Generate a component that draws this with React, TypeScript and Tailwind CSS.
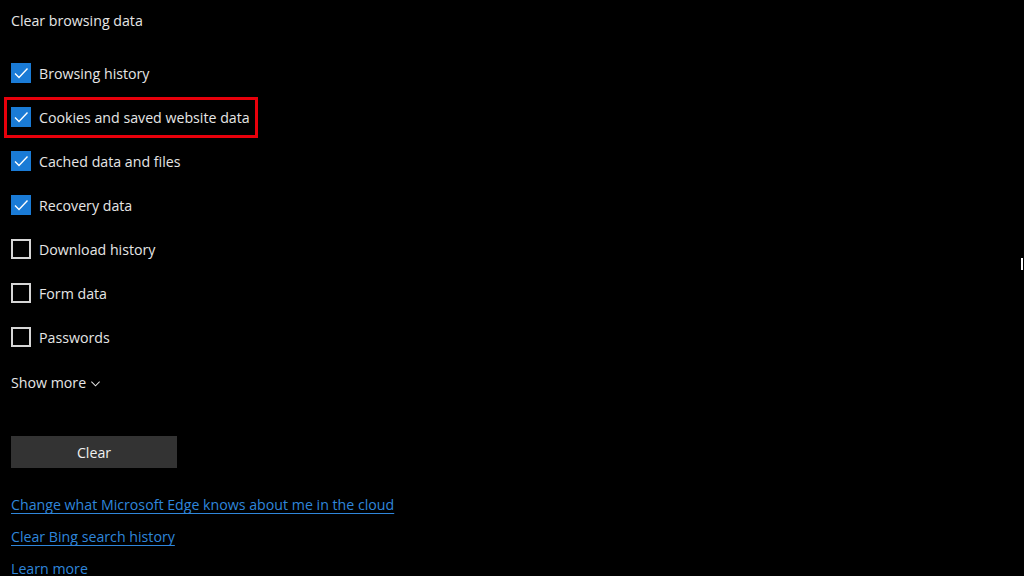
import React from "react";

const ITEMS: { label: string; checked: boolean }[] = [
  { label: "Browsing history", checked: true },
  { label: "Cookies and saved website data", checked: true },
  { label: "Cached data and files", checked: true },
  { label: "Recovery data", checked: true },
  { label: "Download history", checked: false },
  { label: "Form data", checked: false },
  { label: "Passwords", checked: false },
];

const LINKS = [
  "Change what Microsoft Edge knows about me in the cloud",
  "Clear Bing search history",
  "Learn more",
];

function Box({ checked }: { checked: boolean }) {
  if (!checked) {
    return <div className="h-5 w-5 shrink-0 border-2 border-[#d6d6d6]" />;
  }
  return (
    <div className="flex h-5 w-5 shrink-0 items-center justify-center bg-[#1a7bd6]">
      <svg viewBox="0 0 20 20" className="h-5 w-5" fill="none">
        <path d="M4 10.5 L8 14.5 L16.5 5.5" stroke="#ffffff" strokeWidth="1.4" />
      </svg>
    </div>
  );
}

export default function App() {
  return (
    <div
      className="relative h-[576px] w-[1024px] overflow-hidden bg-black pl-[11px] text-[14.2px] text-[#e6e6e6]"
      style={{ fontFamily: '"Open Sans", "Noto Sans", sans-serif' }}
    >
      <div className="flex h-[51px] pt-[11px] leading-[20px]">Clear browsing data</div>

      {ITEMS.map((it) => (
        <div key={it.label} className="flex h-[44px] items-center gap-[8px]">
          <Box checked={it.checked} />
          <span className="pt-[2px] leading-[20px]">{it.label}</span>
        </div>
      ))}

      <div className="flex h-[46px] items-center gap-[4px]">
        <span className="pt-[1px] leading-[20px]">Show more</span>
        <svg viewBox="0 0 12 12" className="mt-[2px] h-[11px] w-[11px]" fill="none">
          <path d="M1.5 4 L6 8.5 L10.5 4" stroke="#e6e6e6" strokeWidth="1.1" />
        </svg>
      </div>

      <button className="mt-[31px] flex h-[32px] w-[166px] items-center justify-center bg-[#333333] pt-[2px] text-[#f0f0f0]">
        Clear
      </button>

      <div className="mt-[20px] flex flex-col">
        {LINKS.map((l) => (
          <div key={l} className="flex h-[32px] items-center">
            <span className="pt-[2px] leading-[20px] text-[#2f86db] underline underline-offset-[3px]">{l}</span>
          </div>
        ))}
      </div>

      {/* red highlight around the cookies row */}
      <div className="absolute left-[4px] top-[97px] h-[41px] w-[254px] border-[3px] border-[#e8000b]" />

      {/* scrollbar sliver at the right edge */}
      <div className="absolute right-[1px] top-[258px] h-[12px] w-[2px] bg-white" />
    </div>
  );
}
